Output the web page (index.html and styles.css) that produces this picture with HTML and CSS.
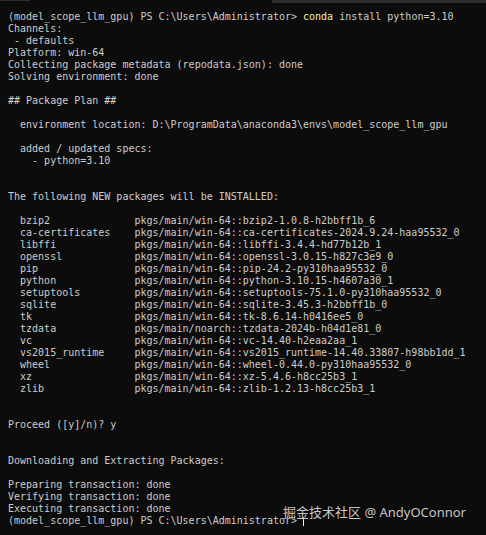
FILE: index.html
```html
<!DOCTYPE html>
<html>
<head>
<meta charset="utf-8">
<link rel="stylesheet" href="styles.css">
</head>
<body>
<div class="window">
  <div class="tabedge">
    <span class="edge edge-left"></span>
    <span class="edge-gap"></span>
    <span class="edge edge-right"></span>
  </div>
<pre class="term">(model_scope_llm_gpu) PS C:\Users\Administrator> <span class="cmd">conda</span> install python=3.10
Channels:
 - defaults
Platform: win-64
Collecting package metadata (repodata.json): done
Solving environment: done

## Package Plan ##

  environment location: D:\ProgramData\anaconda3\envs\model_scope_llm_gpu

  added / updated specs:
    - python=3.10


The following NEW packages will be INSTALLED:

  bzip2              pkgs/main/win-64::bzip2-1.0.8-h2bbff1b_6
  ca-certificates    pkgs/main/win-64::ca-certificates-2024.9.24-haa95532_0
  libffi             pkgs/main/win-64::libffi-3.4.4-hd77b12b_1
  openssl            pkgs/main/win-64::openssl-3.0.15-h827c3e9_0
  pip                pkgs/main/win-64::pip-24.2-py310haa95532_0
  python             pkgs/main/win-64::python-3.10.15-h4607a30_1
  setuptools         pkgs/main/win-64::setuptools-75.1.0-py310haa95532_0
  sqlite             pkgs/main/win-64::sqlite-3.45.3-h2bbff1b_0
  tk                 pkgs/main/win-64::tk-8.6.14-h0416ee5_0
  tzdata             pkgs/main/noarch::tzdata-2024b-h04d1e81_0
  vc                 pkgs/main/win-64::vc-14.40-h2eaa2aa_1
  vs2015_runtime     pkgs/main/win-64::vs2015_runtime-14.40.33807-h98bb1dd_1
  wheel              pkgs/main/win-64::wheel-0.44.0-py310haa95532_0
  xz                 pkgs/main/win-64::xz-5.4.6-h8cc25b3_1
  zlib               pkgs/main/win-64::zlib-1.2.13-h8cc25b3_1


Proceed ([y]/n)? y


Downloading and Extracting Packages:

Preparing transaction: done
Verifying transaction: done
Executing transaction: done
(model_scope_llm_gpu) PS C:\Users\Administrator> <span class="cursor"></span></pre>
  <div class="watermark">掘金技术社区 @ AndyOConnor</div>
</div>
</body>
</html>
```

FILE: styles.css
```css
html, body {
  margin: 0;
  padding: 0;
  background: #0c0c0c;
}

.window {
  position: relative;
  width: 486px;
  height: 535px;
  overflow: hidden;
  background: #0c0c0c;
}

.tabedge {
  display: flex;
  align-items: flex-start;
  height: 3px;
}

.edge {
  display: block;
  background: #2c2c2c;
}

.edge-left {
  width: 30px;
  height: 1px;
}

.edge-gap {
  width: 242px;
}

.edge-right {
  flex: 1;
  height: 3px;
}

.term {
  margin: 8px 0 0 8px;
  font-family: "DejaVu Sans Mono", "Liberation Mono", monospace;
  font-size: 10px;
  line-height: 12px;
  color: #cccccc;
  white-space: pre;
}

.cmd {
  color: #f9f1a5;
}

.cursor {
  display: inline-block;
  width: 1px;
  height: 9px;
  background: #f2f2f2;
  vertical-align: -2px;
}

.watermark {
  position: absolute;
  left: 283px;
  top: 503px;
  font-family: "Noto Sans", "Noto Sans CJK SC", sans-serif;
  font-size: 13px;
  line-height: 18px;
  color: rgba(235, 235, 235, 0.85);
  text-shadow: 0 0 2px rgba(0, 0, 0, 0.6);
  white-space: nowrap;
}
```
